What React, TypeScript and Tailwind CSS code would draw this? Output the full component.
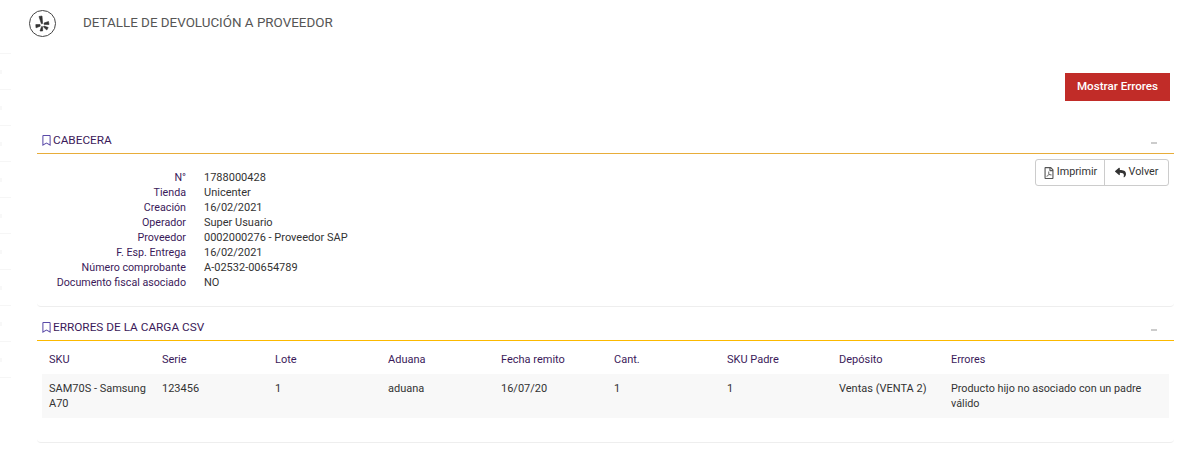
import { FaRegBookmark, FaRegFilePdf, FaReply } from "react-icons/fa";

const DETAILS = [
  ["N°", "1788000428"],
  ["Tienda", "Unicenter"],
  ["Creación", "16/02/2021"],
  ["Operador", "Super Usuario"],
  ["Proveedor", "0002000276 - Proveedor SAP"],
  ["F. Esp. Entrega", "16/02/2021"],
  ["Número comprobante", "A-02532-00654789"],
  ["Documento fiscal asociado", "NO"],
];

const COLUMNS = [
  { title: "SKU", value: "SAM70S - Samsung A70", width: "w-[113px]" },
  { title: "Serie", value: "123456", width: "w-[113px]" },
  { title: "Lote", value: "1", width: "w-[113px]" },
  { title: "Aduana", value: "aduana", width: "w-[113px]" },
  { title: "Fecha remito", value: "16/07/20", width: "w-[113px]" },
  { title: "Cant.", value: "1", width: "w-[113px]" },
  { title: "SKU Padre", value: "1", width: "w-[112px]" },
  { title: "Depósito", value: "Ventas (VENTA 2)", width: "w-[112px]" },
  { title: "Errores", value: "Producto hijo no asociado con un padre válido", width: "flex-1 text-[10.8px]" },
];

const SIDEBAR_ROWS = [0, 1, 2, 3, 4, 5, 6, 7, 8];

function SectionTitle({ title, borderClass }: { title: string; borderClass: string }) {
  return (
    <div className={`flex h-[25px] items-center justify-between border-b pb-[1px] pl-[4px] pr-[17px] ${borderClass}`}>
      <div className="flex items-center gap-[1px] text-[11.8px] text-[#3b1a5a]">
        <FaRegBookmark size={11} className="text-[#5a4aa8]" />
        {title}
      </div>
      <div className="mt-[4px] h-[2px] w-[6px] bg-[#cccccc]" />
    </div>
  );
}

export default function App() {
  return (
    <div className="flex h-[454px] w-[1191px] overflow-hidden bg-white font-['Roboto',sans-serif] text-[11px] text-[#333]">
      {/* remains of the collapsed side menu */}
      <div className="w-[11px] shrink-0">
        <div className="h-[54px] border-b border-[#f6f6f6]" />
        {SIDEBAR_ROWS.map((i) => (
          <div key={i} className="flex h-[36px] items-center border-b border-[#f6f6f6]">
            <div className="h-[4px] w-[2px] bg-[#f8f8f8]" />
          </div>
        ))}
      </div>

      <div className="min-w-0 flex-1">
        <header className="flex h-[47px] items-center pl-[18px]">
          <div className="flex h-[27px] w-[27px] items-center justify-center rounded-full border border-[#444]">
            <svg width="17" height="17" viewBox="0 0 17 17" fill="#333" stroke="#333" strokeWidth="0.6" strokeLinejoin="round">
              <path d="M5 1.5 8 1l.6 7.5-1.2.3z" />
              <path d="M10 8l4.5-1.5.5 3-4.8.1z" />
              <path d="M10 11l4.2 1.5-1.4 2.5L9.5 12z" />
              <path d="M7.6 11.5l1 .2V16H6z" />
              <path d="M6 9.5l.2 1.7-4.2 1.6-.2-3.2z" />
            </svg>
          </div>
          <h1 className="ml-[27px] text-[13.4px] font-normal text-[#555]">DETALLE DE DEVOLUCIÓN A PROVEEDOR</h1>
        </header>

        <div className="flex justify-end pr-[21px] pt-[26px]">
          <button className="h-[28px] w-[105px] bg-[#c12c28] text-[11.6px] font-medium text-white">Mostrar Errores</button>
        </div>

        <section className="ml-[26px] mr-[17px] mt-[28px] h-[178px] rounded-[4px] border-b border-[#eeeeee]">
          <SectionTitle title="CABECERA" borderClass="border-[#e8ad3a]" />
          <div className="flex justify-between px-[5px] pt-[5px]">
            <div className="mt-[11px] grid grid-cols-[144px_1fr] gap-x-[18px] leading-[15px]">
              {DETAILS.map(([label, value]) => (
                <div key={label} className="contents">
                  <div className="text-right text-[10.7px] text-[#3b1a5a]">{label}</div>
                  <div>{value}</div>
                </div>
              ))}
            </div>
            <div className="flex h-[27px] rounded-[3px] border border-[#cccccc] text-[10.8px]">
              <button className="flex w-[69px] items-center justify-center gap-[2px] border-r border-[#cccccc]">
                <FaRegFilePdf size={12} className="text-[#555]" />
                Imprimir
              </button>
              <button className="flex w-[63px] items-center justify-center gap-[3px]">
                <FaReply size={11} />
                Volver
              </button>
            </div>
          </div>
        </section>

        <section className="ml-[26px] mr-[17px] mt-[9px] h-[127px] rounded-[4px] border-b border-[#eeeeee]">
          <SectionTitle title="ERRORES DE LA CARGA CSV" borderClass="border-[#fcb900]" />
          <div className="mx-[5px]">
            <div className="flex h-[33px] items-center pl-[7px] pt-[6px]">
              {COLUMNS.map((c) => (
                <div key={c.title} className={`${c.width} text-[#3b1a5a]`}>{c.title}</div>
              ))}
            </div>
            <div className="flex h-[44px] bg-[#f8f8f8] pl-[7px] pt-[7px] leading-[15px]">
              {COLUMNS.map((c) => (
                <div key={c.title} className={`${c.width} pr-[8px]`}>{c.value}</div>
              ))}
            </div>
          </div>
        </section>
      </div>
    </div>
  );
}
